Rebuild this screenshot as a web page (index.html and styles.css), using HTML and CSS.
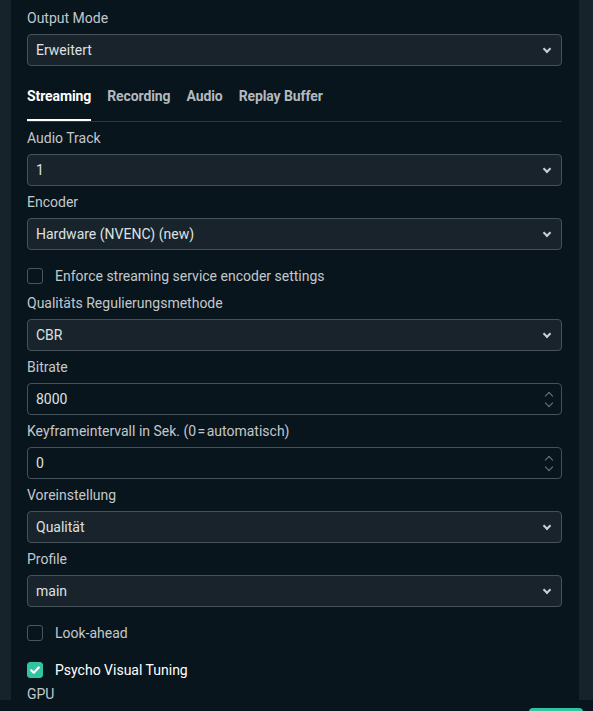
FILE: index.html
```html
<!DOCTYPE html>
<html lang="de">
<head>
    <meta charset="UTF-8">
    <title>Output Settings</title>
    <link rel="stylesheet" href="styles.css">
</head>
<body>
    <div class="frame">
        <div class="side"></div>
        <div class="panel">
            <div class="field">
                <label class="field-label">Output Mode</label>
                <div class="select">Erweitert<span class="chev"></span></div>
            </div>

            <div class="tabs">
                <div class="tab active">Streaming</div>
                <div class="tab">Recording</div>
                <div class="tab">Audio</div>
                <div class="tab">Replay Buffer</div>
            </div>

            <div class="field">
                <label class="field-label">Audio Track</label>
                <div class="select">1<span class="chev"></span></div>
            </div>
            <div class="field">
                <label class="field-label">Encoder</label>
                <div class="select">Hardware (NVENC) (new)<span class="chev"></span></div>
            </div>

            <div class="check-row">
                <span class="box"></span>
                <span class="check-label">Enforce streaming service encoder settings</span>
            </div>

            <div class="field">
                <label class="field-label">Qualitäts Regulierungsmethode</label>
                <div class="select">CBR<span class="chev"></span></div>
            </div>
            <div class="field">
                <label class="field-label">Bitrate</label>
                <div class="select number">8000<span class="spin"></span></div>
            </div>
            <div class="field">
                <label class="field-label">Keyframeintervall in Sek. (0&#8202;=&#8202;automatisch)</label>
                <div class="select number">0<span class="spin"></span></div>
            </div>
            <div class="field">
                <label class="field-label">Voreinstellung</label>
                <div class="select">Qualität<span class="chev"></span></div>
            </div>
            <div class="field">
                <label class="field-label">Profile</label>
                <div class="select">main<span class="chev"></span></div>
            </div>

            <div class="check-row">
                <span class="box"></span>
                <span class="check-label">Look-ahead</span>
            </div>
            <div class="check-row last">
                <span class="box checked">
                    <svg width="12" height="12" viewBox="0 0 12 12"><path d="M2.2 6.3 4.8 8.7 9.8 3.5" fill="none" stroke="#fff" stroke-width="2.2" stroke-linecap="round" stroke-linejoin="round"/></svg>
                </span>
                <span class="check-label on">Psycho Visual Tuning</span>
            </div>

            <div class="field">
                <label class="field-label">GPU</label>
                <div class="select">0<span class="chev"></span></div>
            </div>
        </div>
        <div class="side"></div>
    </div>
    <div class="footer">
        <button class="done">Fertig</button>
    </div>
</body>
</html>
```

FILE: styles.css
```css
body {
    margin: 0;
    background: #09151d;
    font-family: Roboto, "Liberation Sans", sans-serif;
    font-size: 14px;
    color: #c3c8cb;
    height: 711px;
    overflow: hidden;
}
.frame {
    display: grid;
    grid-template-columns: 11px 1fr 14px;
    height: 700px;
    overflow: hidden;
}
.side {
    background: #17232b;
}
.panel {
    padding: 2px 17px 0 16px;
    overflow: hidden;
}
.field-label {
    display: block;
    margin: 8px 0;
    line-height: 16px;
    color: #c3c8cb;
}
.select {
    position: relative;
    height: 30px;
    line-height: 30px;
    padding: 0 8px;
    background: #18232b;
    border: 1px solid #46525a;
    border-radius: 4px;
    color: #dde1e3;
}
.select.number {
    background: #09151d;
}
/* small dropdown caret */
.chev {
    position: absolute;
    right: 11px;
    top: 11px;
    width: 4px;
    height: 4px;
    border-right: 2px solid #c9ced1;
    border-bottom: 2px solid #c9ced1;
    transform: rotate(45deg);
}
/* up / down stepper on number inputs */
.spin::before,
.spin::after {
    content: "";
    position: absolute;
    right: 9px;
    width: 5px;
    height: 5px;
    border-color: #6f7a80;
    border-style: solid;
    border-width: 0;
    transform: rotate(45deg);
}
.spin::before {
    top: 9px;
    border-left-width: 1.5px;
    border-top-width: 1.5px;
}
.spin::after {
    top: 16px;
    border-right-width: 1.5px;
    border-bottom-width: 1.5px;
}
.tabs {
    display: flex;
    gap: 16px;
    margin-top: 15px;
    border-bottom: 1px solid #2c383f;
}
.tab {
    padding: 7px 0 14px;
    line-height: 17px;
    font-weight: 700;
    letter-spacing: -0.1px;
    color: #b3b9bd;
    border-bottom: 2px solid transparent;
}
.tab.active {
    color: #fff;
    border-bottom-color: #fff;
}
.check-row {
    display: flex;
    align-items: center;
    gap: 12px;
    padding: 18px 0 3px;
    height: 16px;
}
.check-row.last {
    padding-bottom: 0;
}
.box {
    box-sizing: border-box;
    width: 16px;
    height: 16px;
    border: 1px solid #4b575e;
    border-radius: 3px;
    display: flex;
    align-items: center;
    justify-content: center;
}
.box.checked {
    background: #31c3a2;
    border-color: #31c3a2;
}
.check-label {
    line-height: 16px;
    color: #c3c8cb;
}
.check-label.on {
    color: #fff;
}
.footer {
    display: flex;
    justify-content: flex-end;
    padding: 8px 10px 0 0;
}
.done {
    width: 54px;
    height: 30px;
    border: 0;
    border-radius: 4px;
    background: #31c3a2;
    color: #09151d;
    font-family: inherit;
}
```
